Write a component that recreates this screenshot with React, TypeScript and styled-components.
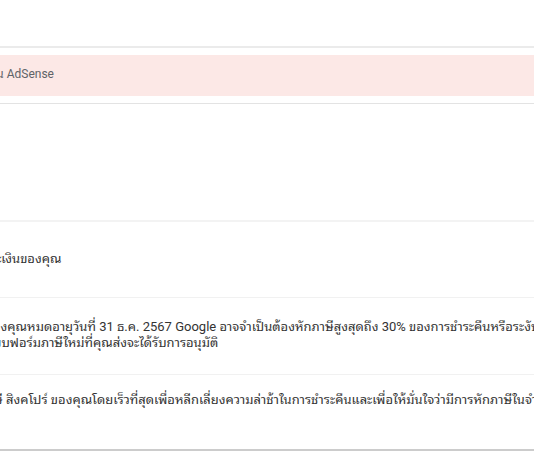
import React from "react";
import styled, { createGlobalStyle } from "styled-components";

const Global = createGlobalStyle`
  html, body { margin: 0; padding: 0; background: #ffffff; overflow: hidden; }
  body { font-family: Roboto, "Leelawadee UI", Tahoma, "Noto Sans Thai Looped", "Noto Serif Thai", Garuda, Loma, Waree, "Noto Sans", "Liberation Sans", sans-serif; }
`;

const Page = styled.div`
  width: 534px;
  height: 462px;
  overflow: hidden;
  display: flex;
  flex-direction: column;
  background: #ffffff;
`;

const TopArea = styled.div`
  height: 46px;
  border-bottom: 2px solid #ebebeb;
  flex-shrink: 0;
`;

const Card = styled.div`
  width: 1200px;
  margin-left: -24px;
  display: flex;
  flex-direction: column;
  background: #ffffff;
  border-bottom: 2px solid #cccccc;
  flex-shrink: 0;
`;

const Banner = styled.div`
  margin-top: 7px;
  height: 41px;
  box-sizing: border-box;
  padding: 11px 0 0 24px;
  background: #fce8e6;
`;

const BannerText = styled.div<{ $shift: number }>`
  font-size: 12px;
  line-height: 16px;
  color: #5f6368;
  white-space: nowrap;
  margin-left: ${(p) => p.$shift}px;
`;

const Spacer = styled.div`
  margin-top: 7px;
  height: 116px;
  border-top: 1px solid #e3e3e3;
  border-bottom: 2px solid #f3f3f3;
`;

const Row = styled.div<{ $h: number; $pad: number; $last?: boolean }>`
  height: ${(p) => p.$h}px;
  box-sizing: border-box;
  padding: ${(p) => p.$pad}px 0 0 24px;
  border-bottom: ${(p) => (p.$last ? "none" : "1px solid #f1f1f1")};
`;

const Line = styled.div<{ $shift: number }>`
  font-size: 13px;
  line-height: 16px;
  color: #333333;
  white-space: nowrap;
  margin-left: ${(p) => p.$shift}px;
`;

export default function App() {
  return (
    <>
      <Global />
      <Page>
        <TopArea />
        <Card>
          <Banner>
            <BannerText $shift={-8}>ใน AdSense</BannerText>
          </Banner>
          <Spacer />
          <Row $h={76} $pad={29}>
            <Line $shift={-10}>ระเงินของคุณ</Line>
          </Row>
          <Row $h={77} $pad={21}>
            <Line $shift={-7}>องคุณหมดอายุวันที่ 31 ธ.ค. 2567 Google อาจจำเป็นต้องหักภาษีสูงสุดถึง 30% ของการชำระคืนหรือระงับการชำระเงิน</Line>
            <Line $shift={-7}>บบฟอร์มภาษีใหม่ที่คุณส่งจะได้รับการอนุมัติ</Line>
          </Row>
          <Row $h={74} $pad={17} $last>
            <Line $shift={-6}>ษี สิงคโปร์ ของคุณโดยเร็วที่สุดเพื่อหลีกเลี่ยงความล่าช้าในการชำระคืนและเพื่อให้มั่นใจว่ามีการหักภาษีในจำนวนที่ถูกต้อง</Line>
          </Row>
        </Card>
      </Page>
    </>
  );
}
